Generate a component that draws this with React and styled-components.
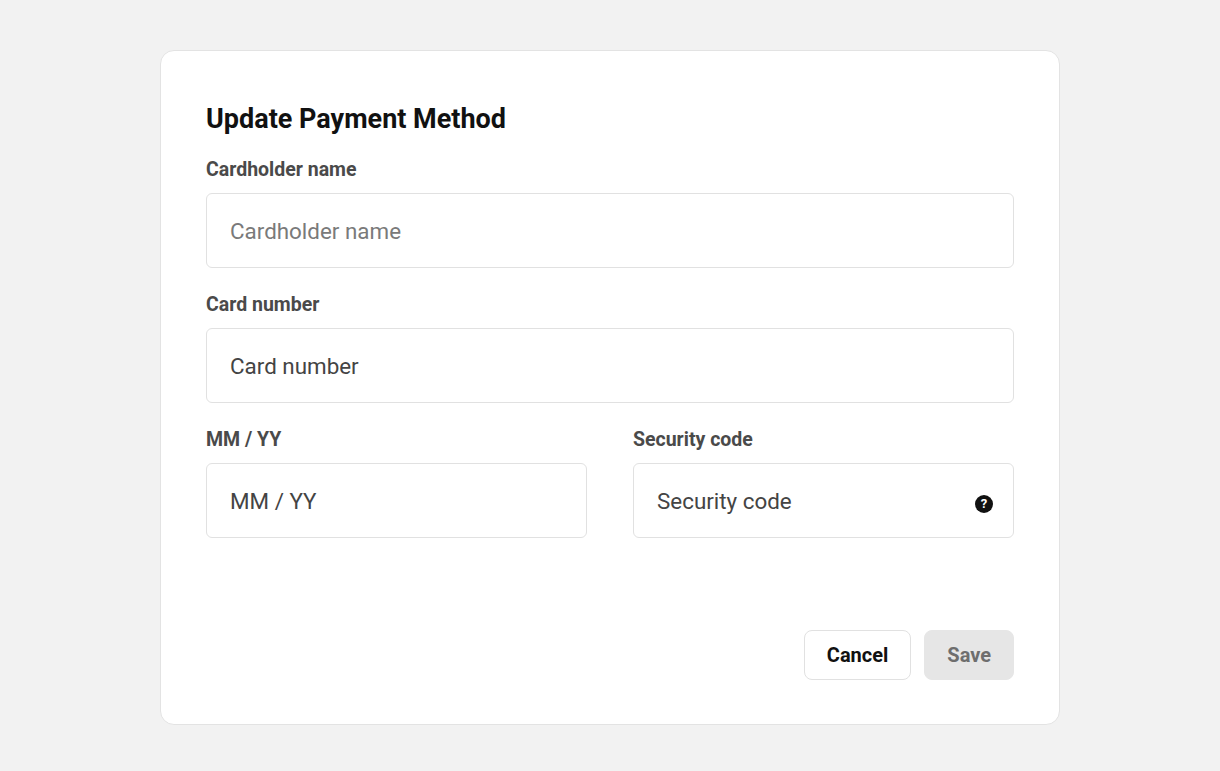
import React from "react";
import styled, { createGlobalStyle } from "styled-components";

const Global = createGlobalStyle`
  body { margin: 0; background: #f2f2f2; font-family: Roboto, "Liberation Sans", sans-serif; }
`;

const Page = styled.div`
  display: flex;
  justify-content: center;
  padding-top: 50px;
`;

const Card = styled.div`
  box-sizing: border-box;
  width: 900px;
  height: 675px;
  background: #fff;
  border: 1px solid #e3e3e3;
  border-radius: 14px;
  padding: 53px 45px 44px;
  display: flex;
  flex-direction: column;
`;

const Title = styled.h1`
  margin: 0 0 25px;
  font-size: 27px;
  line-height: 30px;
  font-weight: 700;
  color: #111;
`;

const Field = styled.div`
  display: flex;
  flex-direction: column;
  flex: ${(p) => (p.$grow ? 1 : "none")};
  min-width: 0;
  margin-bottom: 26px;
`;

const Label = styled.label`
  font-size: 19.5px;
  line-height: 22px;
  font-weight: 700;
  color: #4a4a4a;
  margin-bottom: 12px;
`;

const Box = styled.div`
  display: flex;
  align-items: center;
  box-sizing: border-box;
  height: 75px;
  border: 1px solid #e1e1e1;
  border-radius: 6px;
  padding: 0 23px;
  font-size: 22.4px;
  color: ${(p) => (p.$muted ? "#7a7a7a" : "#444")};
`;

const Row = styled.div`
  display: flex;
  gap: 46px;
`;

const Help = styled.span`
  margin-left: auto;
  width: 18px;
  height: 18px;
  border-radius: 50%;
  background: #111;
  color: #fff;
  font-size: 13px;
  font-weight: 700;
  display: flex;
  align-items: center;
  justify-content: center;
  margin-top: 6px;
  margin-right: -3px;
`;

const Actions = styled.div`
  margin-top: auto;
  display: flex;
  justify-content: flex-end;
  gap: 13px;
`;

const Button = styled.button`
  height: 50px;
  padding: 0 22px;
  border-radius: 8px;
  font-family: inherit;
  font-size: 20px;
  font-weight: 700;
  border: 1px solid ${(p) => (p.$disabled ? "#e6e6e6" : "#e1e1e1")};
  background: ${(p) => (p.$disabled ? "#e6e6e6" : "#fff")};
  color: ${(p) => (p.$disabled ? "#6e6e6e" : "#111")};
`;

export default function App() {
  return (
    <>
      <Global />
      <Page>
        <Card>
          <Title>Update Payment Method</Title>
          <Field>
            <Label>Cardholder name</Label>
            <Box $muted>Cardholder name</Box>
          </Field>
          <Field>
            <Label>Card number</Label>
            <Box>Card number</Box>
          </Field>
          <Row>
            <Field $grow>
              <Label>MM / YY</Label>
              <Box>MM / YY</Box>
            </Field>
            <Field $grow>
              <Label>Security code</Label>
              <Box>
                Security code
                <Help>?</Help>
              </Box>
            </Field>
          </Row>
          <Actions>
            <Button>Cancel</Button>
            <Button $disabled>Save</Button>
          </Actions>
        </Card>
      </Page>
    </>
  );
}
